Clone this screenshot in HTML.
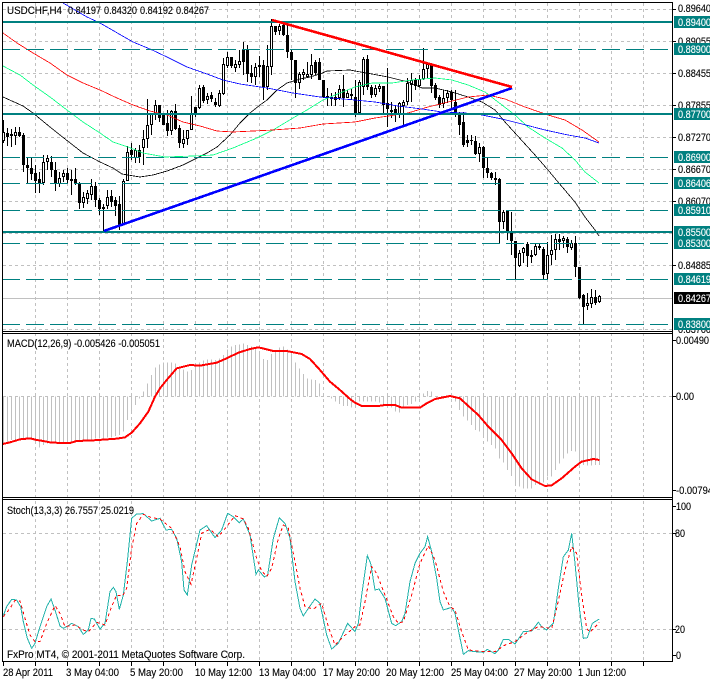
<!DOCTYPE html>
<html><head><meta charset="utf-8"><style>
html,body{margin:0;padding:0;background:#fff;width:710px;height:679px;overflow:hidden}
svg{display:block;position:absolute;left:0;top:0}
text{font-family:"Liberation Sans",sans-serif;font-size:11px;fill:#000;stroke:#000;stroke-width:.12}
.l{fill:#fff;stroke:#fff}
</style></head><body>
<svg width="710" height="679" viewBox="0 0 710 679" xmlns="http://www.w3.org/2000/svg">
<rect width="710" height="679" fill="#fff"/>
<g shape-rendering="crispEdges" fill="none">
<!-- grid -->
<path stroke="#c0c0c0" stroke-dasharray="3 3" d="M35.5 3V661M67.5 3V661M99.5 3V661M131.5 3V661M163.5 3V661M195.5 3V661M227.5 3V661M259.5 3V661M291.5 3V661M323.5 3V661M355.5 3V661M387.5 3V661M419.5 3V661M451.5 3V661M483.5 3V661M515.5 3V661M547.5 3V661M579.5 3V661M611.5 3V661M643.5 3V661"/>
<path stroke="#fff" d="M3 332.5H672M3 498.5H672"/>
<path stroke="#c0c0c0" stroke-dasharray="3 3" d="M3 9.5H672M3 41.5H672M3 73.5H672M3 105.5H672M3 137.5H672M3 169.5H672M3 201.5H672M3 233.5H672M3 265.5H672M3 329.5H672M3 396.5H672M3 533.5H672M3 629.5H672"/>
<path stroke="#c0c0c0" d="M3 298.5H672"/>
<!-- candles -->
<path stroke="#000" d="M3.5 120V143M7.5 128V146M11.5 129V147M15.5 127V145M19.5 127V137M23.5 133V172M27.5 157V183M31.5 158V180M35.5 165V193M39.5 172V193M43.5 155V185M47.5 155V170M51.5 156V177M55.5 162V191M59.5 172V187M63.5 170V182M67.5 168V184M71.5 170V195M75.5 168V185M79.5 182V209M83.5 192V208M87.5 190V204M91.5 179V200M95.5 182V207M99.5 198V215M103.5 204V231M107.5 190V209M111.5 190V207M115.5 197V216M119.5 196V230M123.5 179V225M127.5 146V181M131.5 143V160M135.5 148V163M139.5 145V163M143.5 130V165M147.5 99V148M151.5 113V135M155.5 100V120M159.5 105V122M163.5 113V125M167.5 110V136M171.5 110V135M175.5 104V130M179.5 125V148M183.5 130V148M187.5 130V145M191.5 96V130M195.5 107V117M199.5 85V109M203.5 85V103M207.5 93V104M211.5 92V102M215.5 98V107M219.5 90V107M223.5 58V95M227.5 52V68M231.5 57V68M235.5 60V72M239.5 50V68M243.5 42V75M247.5 45V82M251.5 65V83M255.5 63V85M259.5 56V77M263.5 60V100M267.5 45V90M271.5 19V75M275.5 26V35M279.5 24V35M283.5 23V36M287.5 25V58M291.5 50V80M295.5 60V98M299.5 72V89M303.5 69V80M307.5 62V78M311.5 54V79M315.5 60V75M319.5 58V80M323.5 80V98M327.5 88V106M331.5 93V106M335.5 92V106M339.5 85V100M343.5 75V107M347.5 90V98M351.5 89V100M355.5 80V117M359.5 80V115M363.5 57V95M367.5 55V90M371.5 85V98M375.5 85V97M379.5 84V92M383.5 86V113M387.5 68V127M391.5 102V118M395.5 105V122M399.5 102V118M403.5 100V125M407.5 78V105M411.5 73V102M415.5 78V90M419.5 75V87M423.5 48V80M427.5 62V78M431.5 63V93M435.5 83V100M439.5 95V108M443.5 90V108M447.5 90V103M451.5 90V108M455.5 90V117M459.5 112V135M463.5 112V147M467.5 135V147M471.5 135V145M475.5 136V155M479.5 143V162M483.5 146V178M487.5 158V178M491.5 172V180M495.5 172V185M499.5 178V243M503.5 210V229M507.5 210V240M511.5 212V255M515.5 241V280M519.5 250V267M523.5 247V263M527.5 242V267M531.5 250V263M535.5 243V256M539.5 243V250M543.5 247V279M547.5 242V279M551.5 235V265M555.5 234V260M559.5 234V250M563.5 236V248M567.5 237V253M571.5 240V250M575.5 236V277M579.5 267V299M583.5 294V324M587.5 293V310M591.5 289V308M595.5 290V305M599.5 295V303"/>
<path stroke="#000" stroke-width="3" d="M3.5 132V141M7.5 133V137M11.5 134V136M15.5 132V136M19.5 132V136M23.5 135V165M27.5 165V168M31.5 168V174M35.5 173V181M39.5 179V183M43.5 162V183M47.5 158V162M51.5 162V170M55.5 170V183M59.5 178V184M63.5 173V177M67.5 173V180M71.5 179V181M75.5 179V184M79.5 183V203M83.5 197V203M87.5 193V199M91.5 186V195M95.5 186V200M99.5 200V209M103.5 207V209M107.5 197V206M111.5 196V202M115.5 200V206M119.5 204V226M123.5 181V224M127.5 152V181M131.5 150V155M135.5 150V158M139.5 150V157M143.5 139V148M147.5 125V139M151.5 113V125M155.5 105V114M159.5 105V118M163.5 115V125M167.5 123V131M171.5 111V131M175.5 111V129M179.5 128V143M183.5 139V144M187.5 130V139M191.5 113V130M195.5 107V114M199.5 88V108M203.5 87V101M207.5 96V100M211.5 95V99M215.5 102V105M219.5 93V106M223.5 64V94M227.5 57V66M231.5 57V66M235.5 64V68M239.5 61V65M243.5 49V62M247.5 49V74M251.5 73V77M255.5 67V77M259.5 65V67M263.5 65V87M267.5 66V87M271.5 26V67M275.5 26V32M279.5 26V31M283.5 25V35M287.5 35V52M291.5 52V60M295.5 60V83M299.5 74V83M303.5 72V75M307.5 74V77M311.5 65V75M315.5 62V73M319.5 62V80M323.5 80V97M327.5 96V98M331.5 97V99M335.5 97V100M339.5 89V98M343.5 89V98M347.5 93V98M351.5 94V96M355.5 97V115M359.5 82V113M363.5 59V87M367.5 59V87M371.5 87V95M375.5 88V95M379.5 86V89M383.5 86V105M387.5 103V109M391.5 110V112M395.5 109V113M399.5 103V115M403.5 102V106M407.5 83V102M411.5 80V85M415.5 80V86M419.5 79V86M423.5 69V79M427.5 64V69M431.5 64V86M435.5 85V98M439.5 97V105M443.5 98V104M447.5 93V98M451.5 92V100M455.5 102V114M459.5 113V125M463.5 122V145M467.5 140V143M471.5 140V141M475.5 141V154M479.5 147V154M483.5 147V168M487.5 168V173M491.5 173V178M495.5 178V180M499.5 179V222M503.5 212V222M507.5 211V232M511.5 232V241M515.5 241V258M519.5 253V266M523.5 248V253M527.5 244V256M531.5 255V257M535.5 246V255M539.5 246V248M543.5 249V275M547.5 255V274M551.5 250V255M555.5 239V250M559.5 239V242M563.5 238V241M567.5 239V247M571.5 243V248M575.5 243V267M579.5 267V298M583.5 295V307M587.5 303V306M591.5 297V304M595.5 297V303M599.5 296V302"/>
<path stroke="#fff" d="M3.5 133V140M15.5 133V135M43.5 163V182M47.5 159V161M59.5 179V183M63.5 174V176M83.5 198V202M87.5 194V198M91.5 187V194M103.5 208V208M107.5 198V205M123.5 182V223M127.5 153V180M135.5 151V157M143.5 140V147M147.5 126V138M151.5 114V124M155.5 106V113M171.5 112V130M183.5 140V143M187.5 131V138M191.5 114V129M199.5 89V107M207.5 97V99M219.5 94V105M223.5 65V93M227.5 58V65M235.5 65V67M239.5 62V64M255.5 68V76M267.5 67V86M271.5 27V66M279.5 27V30M299.5 75V82M303.5 73V74M307.5 75V76M311.5 66V74M339.5 90V97M347.5 94V97M359.5 83V112M363.5 60V86M375.5 89V94M379.5 87V88M399.5 104V114M403.5 103V105M407.5 84V101M411.5 81V84M419.5 80V85M423.5 70V78M427.5 65V68M443.5 99V103M447.5 94V97M479.5 148V153M503.5 213V221M519.5 254V265M523.5 249V252M535.5 247V254M547.5 256V273M551.5 251V254M555.5 240V249M563.5 239V240M571.5 244V247M587.5 304V305M591.5 298V303M599.5 297V301"/>
<!-- moving averages -->
<g stroke-width=".8">
<polyline stroke="#000" points="3,97 23,106 33,113 50,127 60,135 83,153 100,162 113,168 122,174 128,175 140,177 153,175 167,171 183,165 193,160 207,153 217,147 230,135 240,123 250,113 260,105 267,100 277,90 287,83 300,79 310,77 320,74 327,71 350,70 355,71 372,74 388,77 408,82 422,88 435,88 452,92 468,97 482,102 495,110 505,122 515,133 535,155 548,170 558,182 575,202 585,217 595,230 599,236"/>
<polyline stroke="#00ff7f" points="3,66 20,75 33,85 50,97 67,110 83,122 100,133 113,142 128,147 143,153 165,157 193,156 213,155 233,148 257,138 273,130 293,118 307,110 323,100 340,93 355,87 372,83 392,83 412,80 435,78 452,80 468,85 485,92 498,102 515,115 528,127 545,138 562,148 575,160 585,172 599,183"/>
<polyline stroke="#ff0000" points="3,33 17,43 33,53 50,63 67,75 83,83 100,90 117,98 133,105 150,111 167,115 183,122 200,126 217,131 233,132 273,130 300,128 323,124 355,122 375,118 395,115 408,113 428,107 448,102 468,97 488,95 505,99 525,107 548,115 565,120 582,130 599,142"/>
<polyline stroke="#0000ff" points="63,3 87,17 100,23 133,42 150,49 167,57 187,67 207,74 223,80 240,84 267,88 293,93 320,97 355,100 375,102 398,106 422,109 442,112 465,113 482,115 502,119 522,124 545,130 568,135 585,138 599,143"/>
</g>
<!-- teal levels -->
<path stroke="#008080" stroke-width="2" d="M3 22H672M3 114H672M3 232H672"/>
<path stroke="#008080" stroke-dasharray="18 6" stroke-dashoffset="1" d="M3 49.5H672M3 157.5H672M3 183.5H672M3 210.5H672M3 243.5H672M3 279.5H672M3 324.5H672"/>
<!-- trend lines -->
<path stroke="#0000ff" stroke-width="2.6" d="M104 231L512 88"/>
<path stroke="#ff0000" stroke-width="2.6" d="M272 20L512 87"/>
<!-- MACD -->
<g transform="translate(0 330) scale(.33333)">
<path stroke="#c0c0c0" stroke-width="3" d="M10.5 199V340M22.5 199V340M34.5 199V330M46.5 199V328M58.5 199V325M70.5 199V325M82.5 199V325M94.5 199V328M106.5 199V340M118.5 199V352M130.5 199V345M142.5 199V340M154.5 199V340M166.5 199V340M178.5 199V340M190.5 199V338M202.5 199V335M214.5 199V335M226.5 199V332M238.5 199V330M250.5 199V328M262.5 199V328M274.5 199V328M286.5 199V325M298.5 199V325M310.5 199V325M322.5 199V322M334.5 199V322M346.5 199V318M358.5 199V315M370.5 199V305M382.5 199V270M394.5 199V250M406.5 199V225M418.5 199V205M430.5 199V185M442.5 199V160M454.5 199V135M466.5 199V112M478.5 199V103M490.5 199V98M502.5 199V97M514.5 199V97M526.5 199V100M538.5 199V110M550.5 199V118M562.5 199V125M574.5 199V120M586.5 199V105M598.5 199V98M610.5 199V92M622.5 199V88M634.5 199V88M646.5 199V90M658.5 199V85M670.5 199V75M682.5 199V58M694.5 199V50M706.5 199V45M718.5 199V43M730.5 199V40M742.5 199V45M754.5 199V50M766.5 199V55M778.5 199V70M790.5 199V87M802.5 199V90M814.5 199V72M826.5 199V60M838.5 199V52M850.5 199V50M862.5 199V58M874.5 199V68M886.5 199V98M898.5 199V115M910.5 199V132M922.5 199V145M934.5 199V148M946.5 199V150M958.5 199V160M994.5 199V205M1006.5 199V215M1018.5 199V222M1030.5 199V228M1042.5 199V228M1054.5 199V232"/>
<path transform="translate(1065 0)" stroke="#c0c0c0" stroke-width="3" d="M1.5 199V225M13.5 199V215M25.5 199V215M37.5 199V215M49.5 199V215M61.5 199V215M73.5 199V218M85.5 199V225M97.5 199V225M109.5 199V232M121.5 199V245M133.5 199V248M145.5 199V235M157.5 199V225M169.5 199V222M181.5 199V215M193.5 199V205M205.5 199V190M217.5 199V183M229.5 199V185M301.5 199V215M313.5 199V240M325.5 199V260M337.5 199V272M349.5 199V285M361.5 199V300M373.5 199V305M385.5 199V320M397.5 199V335M409.5 199V345M421.5 199V355M433.5 199V385M445.5 199V398M457.5 199V420M469.5 199V438M481.5 199V465M493.5 199V470M505.5 199V475M517.5 199V475M529.5 199V475M541.5 199V465M553.5 199V465M565.5 199V458M577.5 199V440M589.5 199V440M601.5 199V420M613.5 199V400M625.5 199V385M637.5 199V370M649.5 199V363M661.5 199V365M673.5 199V395M685.5 199V405M697.5 199V407M709.5 199V407M721.5 199V405M733.5 199V405"/>
<polyline stroke="#ff0000" stroke-width="6" points="8,342 30,337 60,328 90,325 110,330 130,333 155,338 210,339 230,333 280,331 350,326 375,322 395,308 420,280 445,245 465,200 480,175 500,150 530,115 570,105 600,107 650,98 680,85 715,68 750,57 775,52 800,58 820,63 860,63 905,72 930,87 960,120 990,155 1020,180 1050,207 1065,218 1085,228 1135,228 1155,225 1185,225 1205,233 1260,233 1280,220 1305,207 1350,198 1380,205 1405,228 1435,255 1465,290 1505,330 1535,370 1565,415 1595,448 1635,468 1655,466 1685,445 1725,410 1745,395 1780,387 1798,390"/>
</g>
<!-- Stoch -->
<g transform="translate(0 495) scale(.33333)">
<polyline stroke="#20b2aa" stroke-width="3" points="10,362 20,335 35,313 50,315 62,335 70,380 82,430 95,460 105,445 120,395 140,335 153,312 165,345 180,393 190,400 205,392 215,385 235,395 250,418 265,405 273,370 283,372 300,402 315,385 330,290 340,277 348,290 358,343 370,300 382,200 395,70 410,57 430,56 455,78 480,70 498,105 515,103 530,130 545,200 552,285 562,300 575,210 600,105 620,92 645,128 665,105 683,55 700,65 718,83 730,72 750,120 768,238 775,225 793,246 803,240 820,130 838,68 855,85 870,130 885,260 900,340 910,363 925,340 945,312 960,325 980,420 995,462 1015,445 1043,385 1065,410 1075,385 1085,300 1102,182 1112,205 1125,285 1137,282 1155,310 1175,385 1187,392 1205,380 1215,355 1230,260 1245,205 1260,175 1275,155 1283,125 1295,170 1310,250 1320,320 1330,345 1355,337 1365,355 1390,478 1405,467 1425,470 1450,472 1462,463 1485,476 1495,465 1510,433 1525,433 1545,447 1570,410 1595,408 1615,382 1625,395 1640,405 1660,385 1675,280 1690,185 1705,165 1715,115 1725,205 1737,330 1750,430 1762,428 1777,385 1798,372"/>
<polyline stroke="#ff0000" stroke-width="3" stroke-dasharray="9 9" points="10,365 30,340 45,316 60,318 75,370 90,420 105,440 120,440 140,385 165,332 180,355 195,395 225,390 250,405 265,410 290,382 315,390 335,335 350,300 368,303 380,280 395,160 410,85 430,58 455,68 480,72 515,100 540,155 555,230 573,268 590,190 605,115 630,103 655,125 680,95 705,62 730,72 745,100 770,190 785,228 800,245 815,220 835,130 850,90 865,100 885,200 900,280 915,335 940,342 965,325 985,395 1005,450 1030,425 1065,395 1080,390 1095,320 1115,215 1130,235 1155,300 1180,365 1195,385 1210,380 1235,300 1260,205 1285,152 1305,195 1330,290 1350,335 1365,345 1385,410 1405,465 1455,470 1485,470 1515,450 1545,440 1565,425 1585,410 1615,395 1655,400 1670,340 1695,225 1715,155 1730,175 1745,300 1760,400 1770,412 1798,382"/>
</g>
<!-- frame -->
<path stroke="#000" d="M2.5 2.5H672.5V661.5H2.5ZM2.5 331.5H672.5M2.5 333.5H672.5M2.5 497.5H672.5M2.5 499.5H672.5"/>
<!-- ticks -->
<path stroke="#000" d="M672 9.5h4M672 41.5h4M672 73.5h4M672 105.5h4M672 137.5h4M672 169.5h4M672 201.5h4M672 265.5h4M672 340.5h4M672 396.5h4M672 490.5h4M672 506.5h4M672 533.5h4M672 629.5h4M672 655.5h4M3.5 661v5M35.5 661v5M67.5 661v5M99.5 661v5M131.5 661v5M163.5 661v5M195.5 661v5M227.5 661v5M259.5 661v5M291.5 661v5M323.5 661v5M355.5 661v5M387.5 661v5M419.5 661v5M451.5 661v5M483.5 661v5M515.5 661v5M547.5 661v5M579.5 661v5M611.5 661v5M643.5 661v5"/>
</g>
<!-- axis labels -->
<text x="678" y="12" textLength="33" lengthAdjust="spacingAndGlyphs">0.89640</text>
<text x="678" y="45" textLength="33" lengthAdjust="spacingAndGlyphs">0.89055</text>
<text x="678" y="77" textLength="33" lengthAdjust="spacingAndGlyphs">0.88455</text>
<text x="678" y="109" textLength="33" lengthAdjust="spacingAndGlyphs">0.87855</text>
<text x="678" y="141" textLength="33" lengthAdjust="spacingAndGlyphs">0.87270</text>
<text x="678" y="173" textLength="33" lengthAdjust="spacingAndGlyphs">0.86670</text>
<text x="678" y="205" textLength="33" lengthAdjust="spacingAndGlyphs">0.86070</text>
<text x="678" y="269" textLength="33" lengthAdjust="spacingAndGlyphs">0.84885</text>
<text x="678" y="333" textLength="33" lengthAdjust="spacingAndGlyphs">0.83700</text>
<g fill="#008080">
<rect x="674" y="16" width="36" height="12"/>
<rect x="674" y="43" width="36" height="12"/>
<rect x="674" y="108" width="36" height="12"/>
<rect x="674" y="151" width="36" height="12"/>
<rect x="674" y="177" width="36" height="12"/>
<rect x="674" y="204" width="36" height="12"/>
<rect x="674" y="226" width="36" height="12"/>
<rect x="674" y="237" width="36" height="12"/>
<rect x="674" y="273" width="36" height="12"/>
<rect x="674" y="318" width="36" height="12"/>
</g>
<rect x="674" y="292" width="36" height="12" fill="#000"/>
<text class="l" x="678" y="26" textLength="33" lengthAdjust="spacingAndGlyphs">0.89400</text>
<text class="l" x="678" y="53" textLength="33" lengthAdjust="spacingAndGlyphs">0.88900</text>
<text class="l" x="678" y="118" textLength="33" lengthAdjust="spacingAndGlyphs">0.87700</text>
<text class="l" x="678" y="161" textLength="33" lengthAdjust="spacingAndGlyphs">0.86900</text>
<text class="l" x="678" y="187" textLength="33" lengthAdjust="spacingAndGlyphs">0.86406</text>
<text class="l" x="678" y="214" textLength="33" lengthAdjust="spacingAndGlyphs">0.85910</text>
<text class="l" x="678" y="236" textLength="33" lengthAdjust="spacingAndGlyphs">0.85500</text>
<text class="l" x="678" y="247" textLength="33" lengthAdjust="spacingAndGlyphs">0.85300</text>
<text class="l" x="678" y="283" textLength="33" lengthAdjust="spacingAndGlyphs">0.84619</text>
<text class="l" x="678" y="302" textLength="33" lengthAdjust="spacingAndGlyphs">0.84267</text>
<text class="l" x="678" y="328" textLength="33" lengthAdjust="spacingAndGlyphs">0.83800</text>
<text x="676" y="344" textLength="33" lengthAdjust="spacingAndGlyphs">0.00490</text>
<text x="676" y="400" textLength="18" lengthAdjust="spacingAndGlyphs">0.00</text>
<text x="676" y="494" textLength="37" lengthAdjust="spacingAndGlyphs">-0.00794</text>
<text x="676" y="510" textLength="15" lengthAdjust="spacingAndGlyphs">100</text>
<text x="675" y="537" textLength="10" lengthAdjust="spacingAndGlyphs">80</text>
<text x="675" y="633" textLength="10" lengthAdjust="spacingAndGlyphs">20</text>
<text x="676" y="659" textLength="5" lengthAdjust="spacingAndGlyphs">0</text>
<!-- headers -->
<text x="7" y="14" textLength="55" lengthAdjust="spacingAndGlyphs">USDCHF,H4</text>
<text x="68" y="14" textLength="33" lengthAdjust="spacingAndGlyphs">0.84197</text>
<text x="104" y="14" textLength="33" lengthAdjust="spacingAndGlyphs">0.84320</text>
<text x="140" y="14" textLength="33" lengthAdjust="spacingAndGlyphs">0.84192</text>
<text x="176" y="14" textLength="33" lengthAdjust="spacingAndGlyphs">0.84267</text>
<text x="7" y="347" textLength="153" lengthAdjust="spacingAndGlyphs">MACD(12,26,9) -0.005426 -0.005051</text>
<text x="7" y="514" textLength="127" lengthAdjust="spacingAndGlyphs">Stoch(13,3,3) 26.7557 25.0219</text>
<text x="7" y="658" textLength="238" lengthAdjust="spacingAndGlyphs">FxPro MT4, © 2001-2011 MetaQuotes Software Corp.</text>
<!-- dates -->
<text x="3" y="676" textLength="50" lengthAdjust="spacingAndGlyphs">28 Apr 2011</text>
<text x="66" y="676" textLength="53" lengthAdjust="spacingAndGlyphs">3 May 04:00</text>
<text x="130" y="676" textLength="53" lengthAdjust="spacingAndGlyphs">5 May 20:00</text>
<text x="195" y="676" textLength="57" lengthAdjust="spacingAndGlyphs">10 May 12:00</text>
<text x="259" y="676" textLength="57" lengthAdjust="spacingAndGlyphs">13 May 04:00</text>
<text x="323" y="676" textLength="57" lengthAdjust="spacingAndGlyphs">17 May 20:00</text>
<text x="386" y="676" textLength="58" lengthAdjust="spacingAndGlyphs">20 May 12:00</text>
<text x="451" y="676" textLength="57" lengthAdjust="spacingAndGlyphs">25 May 04:00</text>
<text x="514" y="676" textLength="58" lengthAdjust="spacingAndGlyphs">27 May 20:00</text>
<text x="578" y="676" textLength="48" lengthAdjust="spacingAndGlyphs">1 Jun 12:00</text>
</svg>
</body></html>
